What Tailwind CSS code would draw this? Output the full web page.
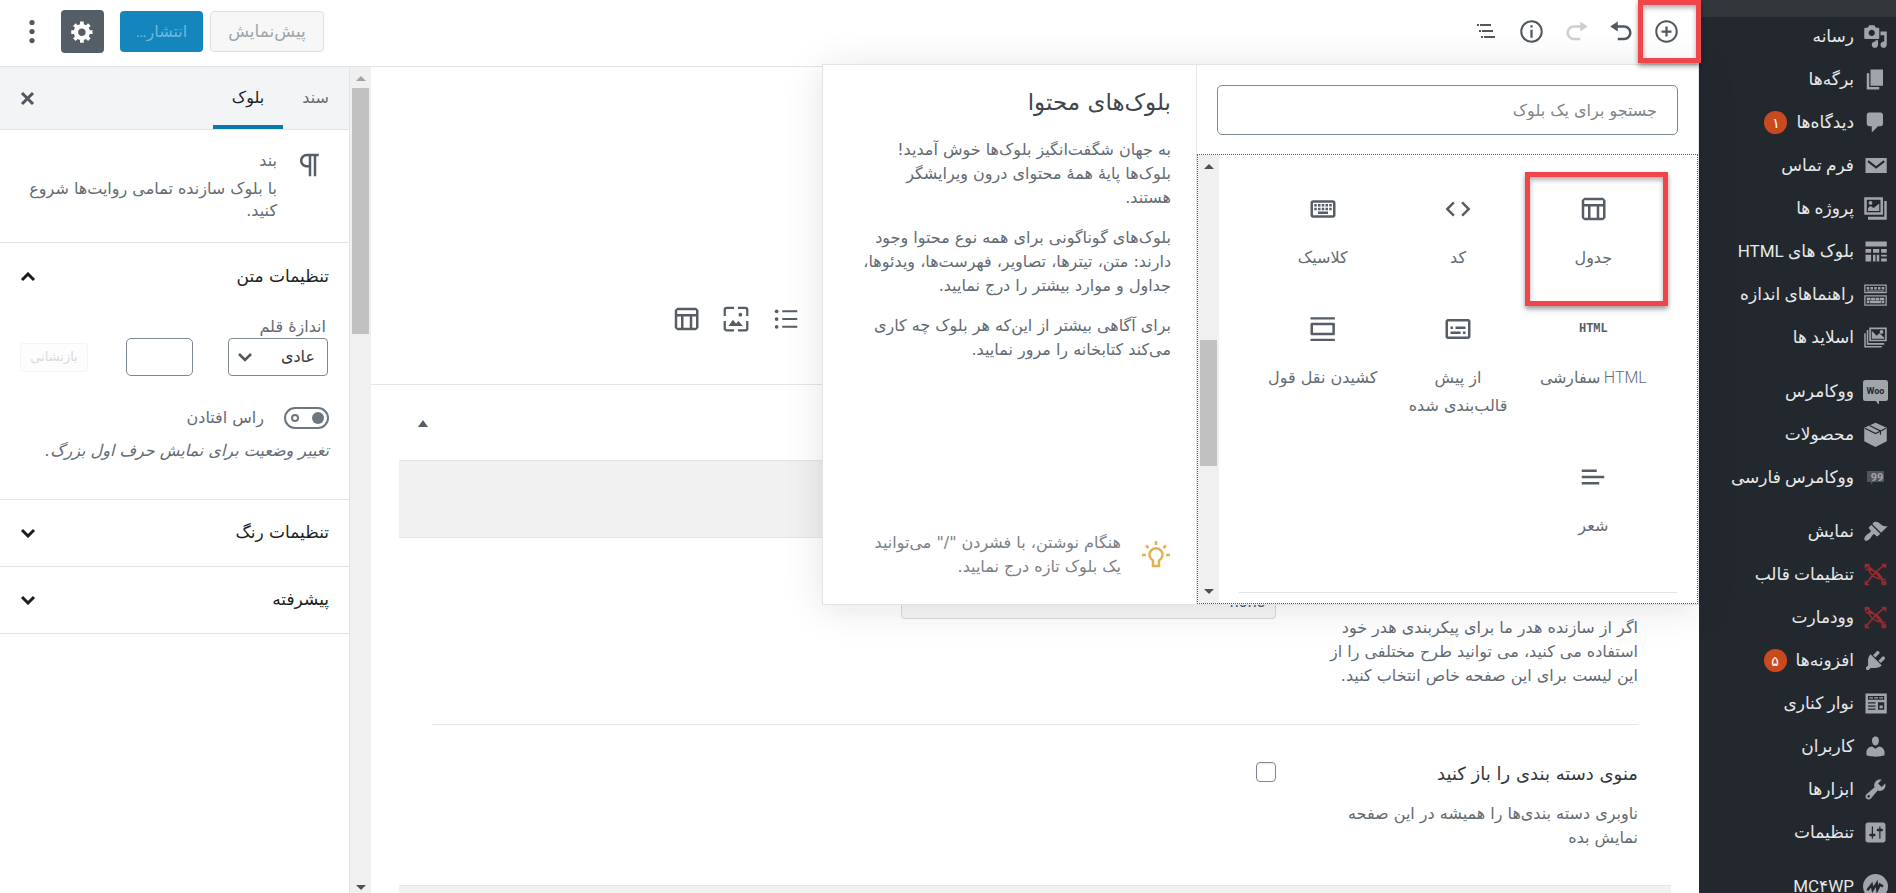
<!DOCTYPE html>
<html lang="fa" dir="rtl">
<head>
<meta charset="utf-8">
<meta name="viewport" content="width=device-width, initial-scale=1">
<title>ویرایش برگه</title>
<script src="https://cdn.jsdelivr.net/npm/@tailwindcss/browser@4"></script>
</head>
<body class="flex h-screen overflow-hidden bg-white font-['DejaVu_Sans',sans-serif] text-base font-normal text-[#646b73]">

<!-- Admin menu -->
<nav aria-label="فهرست مدیریت" class="relative w-[197px] shrink-0 overflow-hidden bg-[#23282f] font-['Roboto','DejaVu_Sans',sans-serif] text-[17px] font-normal text-[#e6e8ea]">
  <div class="h-[17px] bg-[#32373c]"></div>
  <div class="-mt-[2px] flex flex-col gap-[11px] [&_a]:flex [&_a]:h-[43px] [&_a]:items-center [&_a]:gap-[9px] [&_a]:pr-[8px] [&_a]:whitespace-nowrap [&_svg]:size-[25px] [&_svg]:shrink-0 [&_svg]:fill-[#a0a5aa]">
    <ul>
      <li><a href="#"><svg viewBox="0 0 20 20"><path d="M13 11V4c0-.55-.45-1-1-1h-1.67L9 1H5L3.67 3H2c-.55 0-1 .45-1 1v7c0 .55.45 1 1 1h10c.55 0 1-.45 1-1zM7 4.500c1.380 0 2.500 1.120 2.500 2.500S8.380 9.500 7 9.500 4.500 8.380 4.500 7 5.620 4.500 7 4.500zM14 6h5v10.500c0 1.380-1.120 2.500-2.500 2.500S14 17.880 14 16.500s1.120-2.500 2.500-2.500c.17 0 .34.020.500.050V9h-3V6zm-4 8.050V13h2v3.500c0 1.380-1.120 2.500-2.500 2.500S7 17.880 7 16.500 8.120 14 9.500 14c.17 0 .34.020.500.050z"/></svg>رسانه</a></li>
      <li><a href="#"><svg viewBox="0 0 20 20"><path d="M6 15V2h10v13H6zm-1 1h8v2H3V5h2v11z"/></svg>برگه‌ها</a></li>
      <li><a href="#"><svg viewBox="0 0 20 20"><path d="M5 2h9c1.100 0 2 .9 2 2v7c0 1.100-.9 2-2 2h-2l-5 5v-5H5c-1.100 0-2-.9-2-2V4c0-1.100.9-2 2-2z"/></svg>دیدگاه‌ها<span class="flex size-[23px] items-center justify-center rounded-full bg-[#ca4a1f] text-sm text-white">۱</span></a></li>
      <li><a href="#"><svg viewBox="0 0 20 20"><path d="M2 4h17v12H2z"/><path d="M4 6.500l6.500 5 6.500-5" fill="none" stroke="#23282f" stroke-width="1.600"/></svg>فرم تماس</a></li>
      <li><a href="#"><svg viewBox="0 0 20 20"><path fill-rule="evenodd" d="M1 1h15v14H1zM3 3v10h11V3z"/><path d="M17 4h2v15H4v-2.500h13z"/><path d="M4 12V9.500l2-1.500 2.500 1.500L13 6v6z"/><circle cx="6" cy="5.500" r="1.500"/></svg>پروژه ها</a></li>
      <li><a href="#"><svg viewBox="0 0 20 20"><path d="M2 2h17v4H2zM2 8h4.500v3H2zM8 8h5v3H8zM14.500 8H19v3h-4.500zM2 12.500h4.500V18H2zM8 12.500h2V18H8zM11 12.500h2V18h-2zM14.500 12.500H19V14h-4.500zM14.500 15.500H19V18h-4.500z"/></svg>بلوک های HTML</a></li>
      <li><a href="#"><svg viewBox="0 0 20 20"><path fill-rule="evenodd" d="M1 2h18v7H1zM2 3v5h16V3zM1 10.500h18V19H1zM2 11.500V18h16v-6.500z"/><path d="M3 4h2v2H3zM6 4h2v2H6zM9 4h2v2H9zM12 4h2v2h-2zM15 4h2v2h-2zM3 6.800h14v.7H3zM3 12.500h3v2H3zM6.500 12.500h3v2h-3zM10 12.500h3v2h-3zM13.500 12.500H17v2h-3.500zM3 15h2v2H3zM5.500 15h9v2h-9zM15 15h2v2h-2z"/></svg>راهنماهای اندازه</a></li>
      <li><a href="#"><svg viewBox="0 0 20 20"><path fill-rule="evenodd" d="M5 2h14v11H5zM6.300 3.300v8.400h11.400V3.300z"/><path d="M7 4.500l4 4 2-2 4 3.500v1H7z"/><circle cx="14.800" cy="5.500" r="1.500"/><path d="M3 4h1.200v10.300H17v1.400H3zM1 6.500h1.200v10.200H15V18H1z"/></svg>اسلاید ها</a></li>
    </ul>
    <ul>
      <li><a href="#"><svg viewBox="0 0 25 25"><rect width="25" height="21" y="1" rx="2.500"/><path d="M12 21l4 5v-5z"/><text x="12.500" y="15" text-anchor="middle" direction="ltr" class="fill-[#23282f] text-[9px] font-bold">Woo</text></svg>ووکامرس</a></li>
      <li><a href="#"><svg viewBox="0 0 20 20"><path d="M10 .5L19 4.500v10.800L10 20l-9-4.700V4.500z"/><path d="M1.500 5l8.500 4.200L18.500 5M5.200 2.800l8.800 4.300v3" fill="none" stroke="#23282f" stroke-width=".9"/></svg>محصولات</a></li>
      <li><a href="#"><svg viewBox="0 0 25 25"><path class="fill-[#50555c]" d="M4 6h17v11h-11l-2 3v-3H4z"/><text x="14" y="16" text-anchor="middle" class="fill-[#a0a5aa] text-[11px] font-bold">99</text></svg>ووکامرس فارسی</a></li>
    </ul>
    <ul>
      <li><a href="#"><svg viewBox="0 0 20 20"><path d="M14.480 11.060L7.410 3.990l1.500-1.500c.5-.56 2.300-.47 3.510.32 1.210.8 1.430 1.280 2.910 2.100 1.180.64 2.450 1.260 4.450.85zm-.71.71L6.700 4.700 4.930 6.470c-.39.39-.39 1.020 0 1.410l1.060 1.060c.39.39.39 1.030 0 1.420-.6.6-1.430 1.110-2.210 1.690-.35.26-.7.53-1.010.84C1.430 14.230.4 16.080 1.400 17.070c.99 1 2.840-.03 4.180-1.360.31-.31.58-.66.85-1.020.57-.78 1.080-1.610 1.690-2.210.39-.39 1.020-.39 1.410 0l1.060 1.060c.39.39 1.020.39 1.410 0z"/></svg>نمایش</a></li>
      <li><a href="#"><svg viewBox="0 0 20 20"><g fill="none" stroke="#9b2a2f" stroke-width="1.200"><path d="M2 2c5 3 11 9 16 16M18 2C13 5 7 11 2 18M5 2c-2 6 3 12 13 12M15 18c2-6-3-12-13-12M2 5V2h3M18 15v3h-3M2 15v3h3M18 5V2h-3"/></g></svg>تنظیمات قالب</a></li>
      <li><a href="#"><svg viewBox="0 0 20 20"><g fill="none" stroke="#9b2a2f" stroke-width="1.200"><path d="M2 2c5 3 11 9 16 16M18 2C13 5 7 11 2 18M5 2c-2 6 3 12 13 12M15 18c2-6-3-12-13-12M2 5V2h3M18 15v3h-3M2 15v3h3M18 5V2h-3"/></g></svg>وودمارت</a></li>
      <li><a href="#"><svg viewBox="0 0 20 20"><path d="M13.110 4.360L9.870 7.600 8 5.730l3.240-3.240c.35-.34 1.050-.2 1.560.32.52.51.66 1.210.31 1.550zm-8 1.770l.91-1.120 9.010 9.010-1.190.84c-.71.71-2.630 1.160-3.820 1.160H6.140L4.900 17.260c-.59.59-1.540.59-2.120 0-.59-.58-.59-1.530 0-2.120l1.240-1.240v-3.880c0-1.130.4-3.190 1.090-3.890zm7.260 3.970l3.240-3.240c.34-.35 1.040-.21 1.550.31.52.51.66 1.210.31 1.550l-3.240 3.250z"/></svg>افزونه‌ها<span class="flex size-[23px] items-center justify-center rounded-full bg-[#ca4a1f] text-sm text-white">۵</span></a></li>
      <li><a href="#"><svg viewBox="0 0 20 20"><path fill-rule="evenodd" d="M2 2h17v16H2zM4 4v3h13V4zM4 9v1h6V9zM4 11.500v1h6v-1zM4 14v1h6v-1zM12 9v6h5V9zM13.200 11.500h2.600v2.300h-2.600z"/><path d="M5 5h3v1H5zM9 5h3v1H9zM13 5h3v1h-3z"/></svg>نوار کناری</a></li>
      <li><a href="#"><svg viewBox="0 0 20 20"><path d="M10 9.250c-2.270 0-2.730-3.440-2.730-3.440C7 4.020 7.820 2 9.970 2c2.160 0 2.980 2.020 2.710 3.810 0 0-.41 3.440-2.680 3.440zm0 2.570L12.720 10c2.390 0 4.520 2.330 4.520 4.530v2.490s-3.650 1.130-7.240 1.130c-3.650 0-7.240-1.130-7.240-1.130v-2.490c0-2.250 1.940-4.480 4.470-4.480z"/></svg>کاربران</a></li>
      <li><a href="#"><svg viewBox="0 0 20 20"><path d="M16.680 9.770c-1.340 1.340-3.300 1.670-4.950.99l-5.410 6.520c-.99.99-2.590.99-3.580 0s-.99-2.590 0-3.570l6.520-5.420c-.68-1.650-.35-3.610.99-4.950 1.280-1.280 3.120-1.620 4.720-1.060l-2.890 2.890 2.820 2.820 2.860-2.870c.53 1.580.18 3.390-1.080 4.650zM3.810 16.210c.4.39 1.040.39 1.430 0 .4-.4.4-1.040 0-1.430-.39-.4-1.030-.4-1.430 0-.39.39-.39 1.030 0 1.430z"/></svg>ابزارها</a></li>
      <li><a href="#"><svg viewBox="0 0 20 20"><path d="M18 16V4c0-1.100-.9-2-2-2H4c-1.100 0-2 .9-2 2v12c0 1.100.9 2 2 2h12c1.100 0 2-.9 2-2zM8 11h1c.55 0 1 .45 1 1s-.45 1-1 1H8v1.500c0 .28-.22.5-.5.5s-.5-.22-.5-.5V13H6c-.55 0-1-.45-1-1s.45-1 1-1h1V5.500c0-.28.22-.5.5-.5s.5.22.5.5V11zm5-2h-1c-.55 0-1-.45-1-1s.45-1 1-1h1V5.500c0-.28.22-.5.5-.5s.5.22.5.5V7h1c.55 0 1 .45 1 1s-.45 1-1 1h-1v5.500c0 .28-.22.5-.5.5s-.5-.22-.5-.5V9z"/></svg>تنظیمات</a></li>
    </ul>
    <ul>
      <li><a href="#"><svg viewBox="0 0 20 20"><circle cx="10" cy="10" r="10"/><path d="M3.500 13l3.500-4.500.8 4 3.200-5 .5 5 2-4 2.500 1.500" fill="none" stroke="#23282f" stroke-width="2"/></svg>MC۴WP</a></li>
    </ul>
  </div>
</nav>

<div class="flex min-w-0 flex-1 flex-col">

  <!-- Editor toolbar -->
  <header class="flex h-[67px] shrink-0 items-center justify-between border-b border-[#e2e4e7] pr-5 pb-[3px] pl-[18px]">
    <div class="flex items-center gap-5 text-[#50575e] [&_svg]:size-[25px] [&_svg]:fill-current">
      <button type="button" aria-label="افزودن بلوک"><svg viewBox="0 0 20 20"><path d="M10 1c-5 0-9 4-9 9s4 9 9 9 9-4 9-9-4-9-9-9zm0 16.400c-4.100 0-7.400-3.300-7.400-7.400S5.900 2.600 10 2.600s7.400 3.300 7.400 7.400-3.300 7.400-7.400 7.400zM10.900 6H9.100v3.100H6v1.800h3.100V14h1.800v-3.100H14V9.100h-3.100z"/></svg></button>
      <button type="button" aria-label="واگرد"><svg viewBox="0 0 20 20"><path d="M12 5H7V2L1 6l6 4V7h5c2.200 0 4 1.800 4 4s-1.800 4-4 4H7v2h5c3.300 0 6-2.700 6-6s-2.700-6-6-6z"/></svg></button>
      <button type="button" aria-label="از نو" disabled class="text-[#cdd0d3]"><svg viewBox="0 0 20 20"><path d="M8 5h5V2l6 4-6 4V7H8c-2.200 0-4 1.800-4 4s1.800 4 4 4h5v2H8c-3.300 0-6-2.700-6-6s2.700-6 6-6z"/></svg></button>
      <button type="button" aria-label="ساختار محتوا"><svg viewBox="0 0 20 20"><circle cx="10" cy="10" r="8.200" fill="none" stroke="currentColor" stroke-width="1.600"/><path d="M9.100 5h1.800v1.800H9.100zM9.100 8.500h1.800V15H9.100z"/></svg></button>
      <button type="button" aria-label="ناوبری بلوک"><svg viewBox="0 0 25 25"><path d="M3 5h2v2H3zM6 5h11v2H6zM5 11h2v2H5zM8 11h11v2H8zM7 17h2v2H7zM10 17h11v2H10z"/></svg></button>
    </div>
    <div class="flex items-center">
      <button type="button" disabled class="ml-[7px] h-[41px] w-[114px] rounded-[4px] border border-[#dddfe1] bg-[#f7f7f7] text-[17px] text-[#a0a5aa]">پیش‌نمایش</button>
      <button type="button" disabled class="ml-4 h-[41px] w-[83px] rounded-[4px] bg-[#1585bd] font-['Roboto','DejaVu_Sans',sans-serif] text-[#6db7dc]">انتشار…</button>
      <button type="button" aria-label="تنظیمات" class="ml-[15px] flex size-[43px] items-center justify-center rounded-[4px] bg-[#555d66] text-white"><svg class="size-[25px] fill-current" viewBox="0 0 20 20"><path d="M18 12h-2.180c-.17.7-.44 1.350-.81 1.930l1.540 1.540-2.100 2.100-1.540-1.540c-.58.36-1.230.63-1.910.79V19H8v-2.180c-.68-.16-1.330-.43-1.910-.79l-1.540 1.540-2.120-2.120 1.540-1.540c-.36-.58-.63-1.230-.79-1.910H1V9.030h2.170c.16-.7.44-1.350.8-1.940L2.430 5.550l2.100-2.100 1.540 1.540c.58-.37 1.240-.64 1.930-.81V2h3v2.180c.68.16 1.330.43 1.910.79l1.540-1.540 2.120 2.120-1.540 1.540c.36.59.64 1.240.8 1.940H18V12zm-8.500 1.500c1.660 0 3-1.340 3-3s-1.340-3-3-3-3 1.340-3 3 1.340 3 3 3z"/></svg></button>
      <button type="button" aria-label="گزینه‌های بیشتر" class="flex w-7 justify-center"><svg class="h-[25px] w-2 fill-[#50575e]" viewBox="0 0 8 25"><circle cx="4" cy="3.500" r="2.600"/><circle cx="4" cy="12.500" r="2.600"/><circle cx="4" cy="21.500" r="2.600"/></svg></button>
    </div>
  </header>

  <div class="flex min-h-0 flex-1">

    <!-- Editor canvas -->
    <main class="relative min-w-0 flex-1">
      <div class="flex h-full flex-col overflow-hidden">
        <div class="flex h-[318px] shrink-0 items-end justify-center border-b border-[#e2e4e7] pb-[50px]">
          <div class="flex w-[728px] justify-end gap-5 [&_svg]:size-[30px] [&_svg]:fill-[#555d66]">
            <button type="button" aria-label="فهرست"><svg viewBox="0 0 24 24"><path d="M9 5h12v1.600H9zM9 11.200h12v1.600H9zM9 17.400h12V19H9z"/><circle cx="4.500" cy="5.800" r="1.500"/><circle cx="4.500" cy="12" r="1.500"/><circle cx="4.500" cy="18.200" r="1.500"/></svg></button>
            <button type="button" aria-label="نگارخانه"><svg viewBox="0 0 24 24"><path fill="none" stroke="#555d66" stroke-width="1.800" d="M3 9.500V4.500Q3 3 4.500 3h6M13.500 3h6Q21 3 21 4.500v5M21 13.500v6q0 1.500-1.500 1.500h-6M10.500 21h-6Q3 21 3 19.500v-6"/><path d="M6 17.500l3.500-5 2.500 3 2-2 3.500 4z"/><circle cx="15.500" cy="8.500" r="1.500"/></svg></button>
            <button type="button" aria-label="جدول"><svg viewBox="0 0 24 24"><path fill-rule="evenodd" d="M20 3H5L3 5v14l2 2h15l2-2V5l-2-2zm0 2v3H5V5h15zm-5 14h-5v-9h5v9zM5 10h3v9H5v-9zm12 9v-9h3v9h-3z"/></svg></button>
          </div>
        </div>
        <section class="flex flex-1 flex-col px-7">
          <div class="flex h-[75px] shrink-0 items-center justify-end pt-[2px] pl-[18px]">
            <button type="button" aria-label="بستن جعبه" class="flex size-3 items-center justify-center"><svg class="h-[7px] w-[10px] fill-[#555d66]" viewBox="0 0 10 7"><path d="M5 0l5 7H0z"/></svg></button>
          </div>
          <div class="h-[78px] shrink-0 border-y border-[#e2e4e7] bg-[#f1f1f1]"></div>
          <div class="px-[33px]">
            <div class="flex items-start border-b border-[#e5e5e5] pt-[41px] pb-9">
              <p class="w-[362px] shrink-0 pt-[37px] leading-6 whitespace-nowrap">اگر از سازنده هدر ما برای پیکربندی هدر خود<br>استفاده می کنید، می توانید طرح مختلفی را از<br>این لیست برای این صفحه خاص انتخاب کنید.</p>
              <select aria-label="طرح هدر" class="h-10 w-[375px] appearance-none rounded-[4px] border border-[#d5d8db] bg-[#f7f7f7] px-[10px] pt-[6px] font-['Roboto','DejaVu_Sans',sans-serif] text-base text-[#555d66]"><option>none</option></select>
            </div>
            <div class="flex items-start pt-[37px] pb-[35px]">
              <div class="w-[362px] shrink-0 leading-6 whitespace-nowrap">
                <label for="open-menu" class="block text-lg leading-6 font-medium text-[#32373c]">منوی دسته بندی را باز کنید</label>
                <p class="mt-4">ناوبری دسته بندی‌ها را همیشه در این صفحه<br>نمایش بده</p>
              </div>
              <input id="open-menu" type="checkbox" class="size-5 appearance-none rounded-[4px] border border-[#7e8993] bg-white shadow-[inset_0_1px_2px_rgba(0,0,0,0.1)]">
            </div>
          </div>
          <div class="min-h-2 flex-1 border-t border-[#e5e5e5] bg-[#f1f1f1]"></div>
        </section>
      </div>

      <!-- Block inserter -->
      <div role="dialog" aria-label="افزودن بلوک" class="absolute -top-[3px] right-0 flex border border-[#e2e4e7] bg-white shadow-[0_4px_36px_rgba(25,30,35,0.12)]">
        <div class="w-[501px]">
          <div class="px-5 pt-5 pb-[19px]">
            <input type="search" aria-label="جستجو برای یک بلوک" placeholder="جستجو برای یک بلوک" class="block h-[50px] w-full rounded-[5px] border border-[#7e8993] px-5 text-base placeholder:text-[#80858a]">
          </div>
          <div class="flex h-[450px] overflow-hidden border border-dotted border-[#555d66]">
            <div class="flex-1 px-5 pt-[17px]">
              <div class="grid grid-cols-3 px-4 text-center leading-7 [&_button]:flex [&_button]:flex-col [&_button]:items-center [&_button]:gap-5 [&_button]:pt-[22px] [&_button]:pb-5 [&_svg]:size-[30px] [&_svg]:fill-[#555d66]">
                <button type="button"><svg viewBox="0 0 24 24"><path fill-rule="evenodd" d="M20 3H5L3 5v14l2 2h15l2-2V5l-2-2zm0 2v3H5V5h15zm-5 14h-5v-9h5v9zM5 10h3v9H5v-9zm12 9v-9h3v9h-3z"/></svg>جدول</button>
                <button type="button"><svg viewBox="0 0 24 24"><path d="M9.400 16.600L4.800 12l4.600-4.600L8 6l-6 6 6 6zM14.600 16.600l4.600-4.600-4.600-4.600L16 6l6 6-6 6z"/></svg>کد</button>
                <button type="button"><svg viewBox="0 0 24 24"><path fill-rule="evenodd" d="M20 7v10H4V7h16m0-2H4c-1.100 0-2 .9-2 2v10c0 1.100.9 2 2 2h16c1.100 0 2-.9 2-2V7c0-1.100-.9-2-2-2z"/><path d="M11 8h2v2h-2zM11 11h2v2h-2zM8 8h2v2H8zM8 11h2v2H8zM5 11h2v2H5zM5 8h2v2H5zM8 14h8v2H8zM14 11h2v2h-2zM14 8h2v2h-2zM17 11h2v2h-2zM17 8h2v2h-2z"/></svg>کلاسیک</button>
                <button type="button"><span aria-hidden="true" class="flex h-[30px] items-center font-['Liberation_Mono',monospace] text-[12px] font-bold text-[#555d66]">HTML</span><span class="font-['Roboto','DejaVu_Sans',sans-serif] font-light">HTML سفارشی</span></button>
                <button type="button"><svg viewBox="0 0 24 24"><path fill-rule="evenodd" d="M20 4H4c-1.100 0-2 .9-2 2v12c0 1.100.9 2 2 2h16c1.100 0 2-.9 2-2V6c0-1.100-.9-2-2-2zm0 14H4V6h16v12z"/><path d="M6 10h2v2H6zM6 14h8v2H6zM16 14h2v2h-2zM10 10h8v2h-8z"/></svg><span class="whitespace-nowrap">از پیش<br>قالب‌بندی شده</span></button>
                <button type="button"><svg viewBox="0 0 24 24"><path fill-rule="evenodd" d="M2 2.500h19.500v1.800H2zM2 19.700h19.500v1.800H2zM2 8q0-1 1-1h17.500q1 0 1 1v8q0 1-1 1H3q-1 0-1-1zM4 9v6h15.500V9z"/></svg><span class="whitespace-nowrap">کشیدن نقل قول</span></button>
                <button type="button"><svg viewBox="0 0 24 24"><path d="M3 6h12v2H3zM3 11h18v2H3zM3 16h14v2H3z"/></svg>شعر</button>
              </div>
              <hr class="mt-8 border-[#e2e4e7]">
            </div>
            <div aria-hidden="true" class="flex w-[21px] flex-col items-center bg-[#f0f0f0] pt-[9px] pb-[9px]">
              <svg class="h-[5px] w-[10px] fill-[#505050]" viewBox="0 0 10 5"><path d="M5 0l5 5H0z"/></svg>
              <div class="mt-[171px] h-[126px] w-[17px] bg-[#c1c1c1]"></div>
              <svg class="mt-auto h-[5px] w-[10px] fill-[#505050]" viewBox="0 0 10 5"><path d="M0 0h10L5 5z"/></svg>
            </div>
          </div>
        </div>
        <div class="flex w-[374px] flex-col border-r border-[#e2e4e7] pt-[21px] pr-[25px] pb-[25px] leading-6 whitespace-nowrap">
          <h2 class="text-[23px] leading-8 font-medium text-[#40464d]">بلوک‌های محتوا</h2>
          <p class="mt-5">به جهان شگفت‌انگیز بلوک‌ها خوش آمدید!<br>بلوک‌ها پایهٔ همهٔ محتوای درون ویرایشگر<br>هستند.</p>
          <p class="mt-4">بلوک‌های گوناگونی برای همه نوع محتوا وجود<br>دارند: متن، تیترها، تصاویر، فهرست‌ها، ویدئوها،<br>جداول و موارد بیشتر را درج نمایید.</p>
          <p class="mt-4">برای آگاهی بیشتر از این‌که هر بلوک چه کاری<br>می‌کند کتابخانه را مرور نمایید.</p>
          <div class="mt-auto flex items-center gap-5 text-[#7c8187]">
            <svg class="size-[30px] shrink-0" viewBox="0 0 30 30"><g fill="none" stroke="#e0b252" stroke-width="2.500"><path d="M12 26v-5.500a6.500 6.500 0 1 1 6 0V26z"/><path d="M15 1v4M1 15h4M25 15h4M5 5.500l2.500 2.500M25 5.500L22.500 8"/></g></svg>
            <p>هنگام نوشتن، با فشردن "/" می‌توانید<br>یک بلوک تازه درج نمایید.</p>
          </div>
        </div>
      </div>

      <!-- Highlight frames -->
      <div aria-hidden="true" class="absolute -top-[67px] -right-[2px] h-[63px] w-[63px] border-5 border-[#f0464a] shadow-[0_3px_5px_rgba(0,0,0,0.4),inset_0_3px_5px_rgba(0,0,0,0.3)]"></div>
      <div aria-hidden="true" class="absolute top-[105px] right-[31px] h-[134px] w-[143px] border-5 border-[#f0464a] shadow-[0_3px_5px_rgba(0,0,0,0.4),inset_0_3px_5px_rgba(0,0,0,0.3)]"></div>
    </main>

    <!-- Canvas scrollbar -->
    <div aria-hidden="true" class="flex w-[22px] shrink-0 flex-col items-center border-l border-[#e2e4e7] bg-[#f0f0f0] pt-[9px] pb-[3px]">
      <svg class="h-[5px] w-[10px] fill-[#a3a3a3]" viewBox="0 0 10 5"><path d="M5 0l5 5H0z"/></svg>
      <div class="mt-[7px] h-[246px] w-[17px] bg-[#c1c1c1]"></div>
      <svg class="mt-auto h-[5px] w-[10px] fill-[#505050]" viewBox="0 0 10 5"><path d="M0 0h10L5 5z"/></svg>
    </div>

    <!-- Settings sidebar -->
    <aside class="w-[349px] shrink-0 bg-white">
      <div class="flex h-[63px] items-stretch border-b border-[#e2e4e7] bg-[#f3f4f5]">
        <button type="button" class="w-[66px] pr-5 text-right">سند</button>
        <button type="button" class="w-[70px] border-b-4 border-[#0a77ad] pt-1 font-medium text-[#191e23]">بلوک</button>
        <button type="button" aria-label="بستن تنظیمات" class="mr-auto ml-5 flex items-center"><svg class="size-[15px]" viewBox="0 0 15 15"><path d="M2 2l11 11M13 2L2 13" stroke="#50575e" stroke-width="3"/></svg></button>
      </div>
      <div class="flex h-[113px] gap-[18px] border-b border-[#e2e4e7] pt-5 pr-[24px]">
        <svg class="size-[30px] fill-[#555d66]" viewBox="0 0 24 24"><path d="M11 5v7H9.500C7.600 12 6 10.400 6 8.500S7.600 5 9.500 5H11m8-2H9.500C6.500 3 4 5.500 4 8.500S6.500 14 9.500 14H11v7h2V5h2v16h2V5h2V3z"/></svg>
        <div class="leading-[22px] whitespace-nowrap">
          <h2>بند</h2>
          <p class="mt-[6px]">با بلوک سازنده تمامی روایت‌ها شروع<br>کنید.</p>
        </div>
      </div>
      <section class="h-[257px] border-b border-[#e2e4e7] px-5">
        <button type="button" class="flex h-[67px] w-full items-center justify-between text-[17px] font-medium text-[#191e23]">تنظیمات متن<svg class="h-[10px] w-4" viewBox="0 0 16 10"><path d="M2 8l6-6 6 6" fill="none" stroke="#191e23" stroke-width="3"/></svg></button>
        <label for="font-size" class="mt-[5px] block pr-[3px] leading-[23px]">اندازهٔ قلم</label>
        <div class="flex items-center pr-[1px]">
          <div class="relative">
            <select id="font-size" class="block h-[38px] w-[100px] appearance-none rounded-[4px] border border-[#7e8993] bg-white pr-3 pl-8 text-base text-[#32373c]"><option>عادی</option></select>
            <svg class="pointer-events-none absolute top-[15px] left-[10px] h-[9px] w-[14px]" viewBox="0 0 14 9"><path d="M1 1l6 6 6-6" fill="none" stroke="#555" stroke-width="2.500"/></svg>
          </div>
          <input type="number" aria-label="اندازهٔ سفارشی" class="mr-[35px] h-[38px] w-[67px] rounded-[5px] border border-[#7e8993]">
          <button type="button" disabled class="mr-auto h-[29px] w-[68px] rounded-[3px] border border-[#f3f4f4] bg-[#fdfdfd] text-[13px] text-[#d9dbdd]">بازنشانی</button>
        </div>
        <div class="mt-[31px] flex h-[22px] items-center gap-5">
          <span class="relative flex h-[22px] w-[45px]">
            <input id="drop-cap" type="checkbox" role="switch" class="h-[22px] w-[45px] appearance-none rounded-full border-2 border-[#6c7781] bg-white">
            <span aria-hidden="true" class="pointer-events-none absolute top-[5px] right-[5px] size-3 rounded-full bg-[#6c7781]"></span>
            <span aria-hidden="true" class="pointer-events-none absolute top-[7px] left-[7px] size-2 rounded-full border-2 border-[#6c7781]"></span>
          </span>
          <label for="drop-cap">راس افتادن</label>
        </div>
        <p class="mt-[10px] leading-6 whitespace-nowrap italic">تغییر وضعیت برای نمایش حرف اول بزرگ.</p>
      </section>
      <section class="border-b border-[#e2e4e7] px-5">
        <button type="button" class="flex h-[66px] w-full items-center justify-between text-[17px] font-normal text-[#191e23]">تنظیمات رنگ<svg class="h-[10px] w-4" viewBox="0 0 16 10"><path d="M2 2l6 6 6-6" fill="none" stroke="#191e23" stroke-width="3"/></svg></button>
      </section>
      <section class="border-b border-[#e2e4e7] px-5">
        <button type="button" class="flex h-[66px] w-full items-center justify-between text-[17px] font-normal text-[#191e23]">پیشرفته<svg class="h-[10px] w-4" viewBox="0 0 16 10"><path d="M2 2l6 6 6-6" fill="none" stroke="#191e23" stroke-width="3"/></svg></button>
      </section>
    </aside>
  </div>
</div>
</body>
</html>
